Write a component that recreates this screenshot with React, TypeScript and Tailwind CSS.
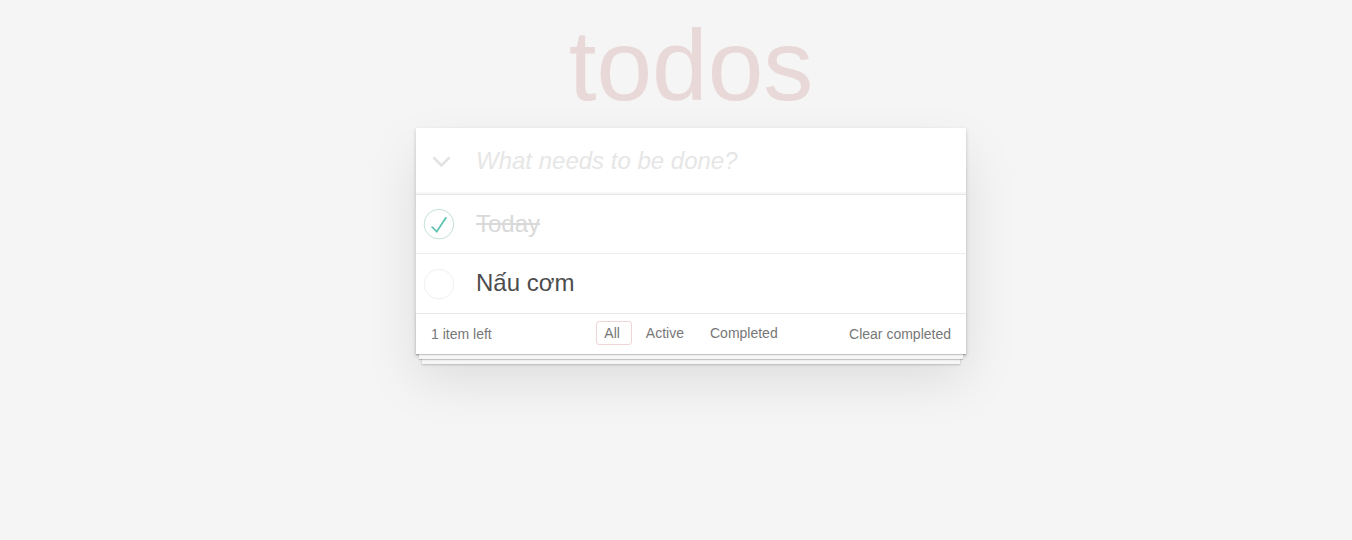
const todos = [
  { id: 1, title: "Today", completed: true },
  { id: 2, title: "Nấu cơm", completed: false },
];

const filters = [
  { label: "All", cls: "border-[rgba(175,47,47,0.2)] pr-[11px]" },
  { label: "Active", cls: "border-transparent pr-[7px] mr-[7px]" },
  { label: "Completed", cls: "border-transparent pr-[7px]" },
];

function Toggle({ done }: { done: boolean }) {
  return (
    <svg width="40" height="40" viewBox="-10 -18 100 135" className="shrink-0">
      <circle
        cx="50"
        cy="50"
        r="50"
        fill="none"
        stroke={done ? "#bddad5" : "#ededed"}
        strokeWidth="3"
      />
      {done && <path fill="#5dc2af" d="M72 25L42 71 27 56l-4 4 20 20 34-52z" />}
    </svg>
  );
}

export default function App() {
  const left = todos.filter((t) => !t.completed).length;

  return (
    <div className="min-h-screen bg-[#f5f5f5] font-['Liberation_Sans',Arial,sans-serif] text-[14px] text-[#4d4d4d]">
      <div className="flex justify-center pl-[30px]">
        <div className="w-[550px]">
          <h1 className="pt-[15px] mb-[13px] text-center text-[100px] leading-[100px] font-thin text-[#e9d8d8]">
            todos
          </h1>

          <section className="bg-white shadow-[0_2px_4px_0_rgba(0,0,0,0.2),0_25px_50px_0_rgba(0,0,0,0.1)]">
            <header className="flex items-center shadow-[inset_0_-2px_1px_rgba(0,0,0,0.03)]">
              <div className="flex w-[60px] shrink-0 justify-center">
                <svg width="20" height="12" viewBox="0 0 20 12" className="ml-[-9px] mt-[2px]">
                  <polyline
                    points="1.5,1.5 9.5,9.5 17.5,1.5"
                    fill="none"
                    stroke="#e3e3e3"
                    strokeWidth="2.6"
                  />
                </svg>
              </div>
              <input
                className="w-full py-4 pr-4 text-2xl leading-[1.4] outline-none bg-transparent placeholder:italic placeholder:font-light placeholder:text-[#e6e6e6]"
                placeholder="What needs to be done?"
              />
            </header>

            <ul className="border-t border-[#e6e6e6]">
              {todos.map((todo, i) => (
                <li
                  key={todo.id}
                  className={`flex items-center text-2xl ${
                    i < todos.length - 1 ? "border-b border-[#ededed]" : ""
                  }`}
                >
                  <Toggle done={todo.completed} />
                  <label
                    className={`ml-5 py-[15px] pr-[15px] leading-[1.2] ${
                      todo.completed ? "text-[#d9d9d9] line-through" : "text-[#4d4d4d]"
                    }`}
                  >
                    {todo.title}
                  </label>
                </li>
              ))}
            </ul>

            <footer className="grid h-[41px] grid-cols-[1fr_auto_1fr] items-center border-t border-[#e6e6e6] px-[15px] text-[#777] shadow-[0_1px_1px_rgba(0,0,0,0.2),0_8px_0_-3px_#f6f6f6,0_9px_1px_-3px_rgba(0,0,0,0.2),0_16px_0_-6px_#f6f6f6,0_17px_2px_-6px_rgba(0,0,0,0.2)]">
              <span className="text-left leading-5">
                {left} item{left === 1 ? "" : "s"} left
              </span>
              <ul className="flex mt-[-2px]">
                {filters.map((f) => (
                  <li key={f.label}>
                    <a
                      className={`m-[3px] block rounded-[3px] border pl-[7px] py-[3px] leading-4 ${f.cls}`}
                    >
                      {f.label}
                    </a>
                  </li>
                ))}
              </ul>
              <button className="justify-self-end leading-5 text-[#777]">Clear completed</button>
            </footer>
          </section>
        </div>
      </div>
    </div>
  );
}
